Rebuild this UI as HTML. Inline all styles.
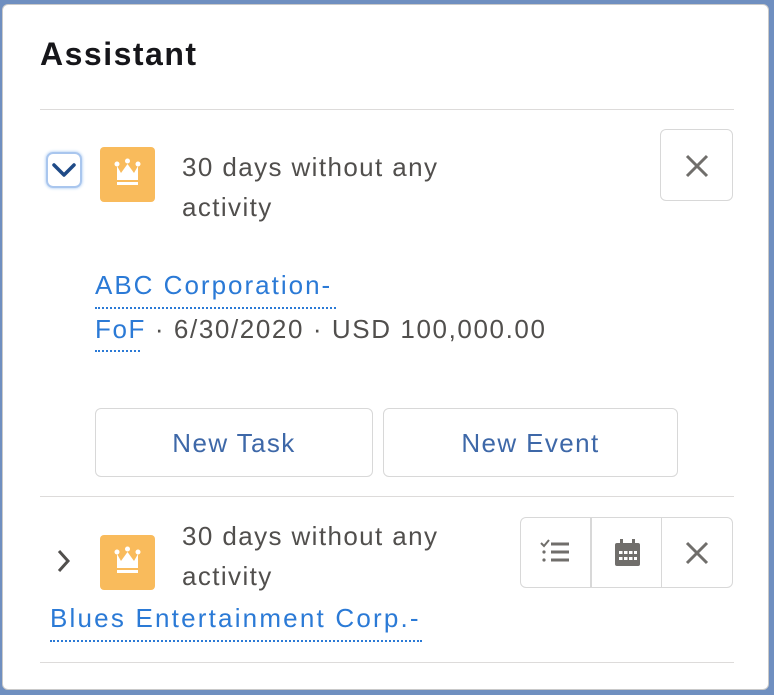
<!DOCTYPE html>
<html><head><meta charset="utf-8"><style>
*{margin:0;padding:0;box-sizing:border-box}
body{width:774px;height:695px;background:#6f8fc0;font-family:"Liberation Sans",sans-serif;position:relative;overflow:hidden}
.card{position:absolute;left:2px;top:4px;width:767px;height:686px;background:#fff;border:1px solid #c9c9c9;border-radius:6px}
.a{position:absolute;white-space:nowrap}
.t{color:#514f4d;font-size:26px;line-height:40px;letter-spacing:1.4px}
.lk{color:#2b7ad6;letter-spacing:2px}
.hr{position:absolute;left:40px;width:694px;height:1px;background:#dddbda}
.btn{position:absolute;border:1px solid #d8d8d8;border-radius:6px;background:#fff;color:#3e68a8;font-size:26px;letter-spacing:1.4px;text-align:center}
.ic{position:absolute;width:55px;height:55px;background:#f9bb5c;border-radius:4px}
.ul{position:absolute;height:0;border-top:2px dotted #2b7ad6}
</style></head><body>
<div class="card"></div>
<div class="a" style="left:40px;top:36px;font-size:32px;letter-spacing:1.5px;font-weight:bold;color:#16161a">Assistant</div>
<div class="hr" style="top:109px"></div>
<div class="a" style="left:46px;top:152px;width:36px;height:36px;border:2px solid #a9c6ee;border-radius:7px;box-shadow:0 0 3px #9bc0f0"></div>
<svg class="a" style="left:50px;top:160px" width="28" height="20"><path d="M4 5 L14 15 L24 5" stroke="#1f4a87" stroke-width="3.5" fill="none" stroke-linecap="round" stroke-linejoin="round"/></svg>
<div class="ic" style="left:100px;top:147px"></div>
<svg class="a" style="left:100px;top:147px" width="55" height="55"><g fill="#fff"><circle cx="17" cy="17" r="2.5"/><circle cx="27.5" cy="14" r="2.5"/><circle cx="38" cy="17" r="2.5"/><path d="M17 19 L21 26 L27.5 17 L34 26 L38 19 L38 33 L17 33Z"/><rect x="17" y="35" width="21" height="3"/></g></svg>
<div class="a t" style="left:182px;top:147px">30 days without any<br>activity</div>
<div class="btn" style="left:660px;top:129px;width:73px;height:72px"></div>
<svg class="a" style="left:684px;top:153px" width="26" height="26"><path d="M3 3 L23 23 M23 3 L3 23" stroke="#706e6b" stroke-width="3"/></svg>
<div class="a t lk" style="left:95px;top:265px">ABC Corporation-</div>
<div class="ul" style="left:95px;top:307px;width:241px"></div>
<div class="a t" style="left:95px;top:309px;letter-spacing:1.6px"><span class="lk" style="letter-spacing:1.6px">FoF</span> · 6/30/2020 · USD 100,000.00</div>
<div class="ul" style="left:95px;top:350px;width:45px"></div>
<div class="btn" style="left:95px;top:408px;width:278px;height:69px;line-height:68px">New Task</div>
<div class="btn" style="left:383px;top:408px;width:295px;height:69px;line-height:68px">New Event</div>
<div class="hr" style="top:496px"></div>
<svg class="a" style="left:54px;top:547px" width="20" height="28"><path d="M5 4 L14 14 L5 24" stroke="#514f4d" stroke-width="3" fill="none"/></svg>
<div class="ic" style="left:100px;top:535px"></div>
<svg class="a" style="left:100px;top:535px" width="55" height="55"><g fill="#fff"><circle cx="17" cy="17" r="2.5"/><circle cx="27.5" cy="14" r="2.5"/><circle cx="38" cy="17" r="2.5"/><path d="M17 19 L21 26 L27.5 17 L34 26 L38 19 L38 33 L17 33Z"/><rect x="17" y="35" width="21" height="3"/></g></svg>
<div class="a t" style="left:182px;top:516px">30 days without any<br>activity</div>
<div class="btn" style="left:520px;top:517px;width:213px;height:71px"></div>
<div class="a" style="left:590px;top:518px;width:2px;height:69px;background:#d8d8d8"></div>
<div class="a" style="left:661px;top:518px;width:1px;height:69px;background:#d8d8d8"></div>
<svg class="a" style="left:538px;top:538px" width="36" height="30"><g stroke="#706e6b" stroke-width="3" fill="none"><path d="M3 5 L6 8 L11 2" stroke-width="2"/><path d="M13 6 H31 M13 14 H31 M13 22 H31"/></g><g fill="#706e6b"><circle cx="6" cy="14" r="1.6"/><circle cx="6" cy="22" r="1.6"/></g></svg>
<svg class="a" style="left:612px;top:538px" width="30" height="30"><g fill="#706e6b"><rect x="3" y="5" width="25" height="23" rx="2"/><rect x="8" y="1" width="3" height="6"/><rect x="20" y="1" width="3" height="6"/></g><g fill="#fff"><rect x="7" y="13" width="3.5" height="3"/><rect x="12" y="13" width="3.5" height="3"/><rect x="17" y="13" width="3.5" height="3"/><rect x="22" y="13" width="3" height="3"/><rect x="7" y="19" width="3.5" height="3"/><rect x="12" y="19" width="3.5" height="3"/><rect x="17" y="19" width="3.5" height="3"/><rect x="22" y="19" width="3" height="3"/></g></svg>
<svg class="a" style="left:684px;top:540px" width="26" height="26"><path d="M3 3 L23 23 M23 3 L3 23" stroke="#706e6b" stroke-width="3"/></svg>
<div class="a t lk" style="left:50px;top:598px;letter-spacing:2.2px">Blues Entertainment Corp.-</div>
<div class="ul" style="left:50px;top:640px;width:372px"></div>
<div class="hr" style="top:662px"></div>
</body></html>
